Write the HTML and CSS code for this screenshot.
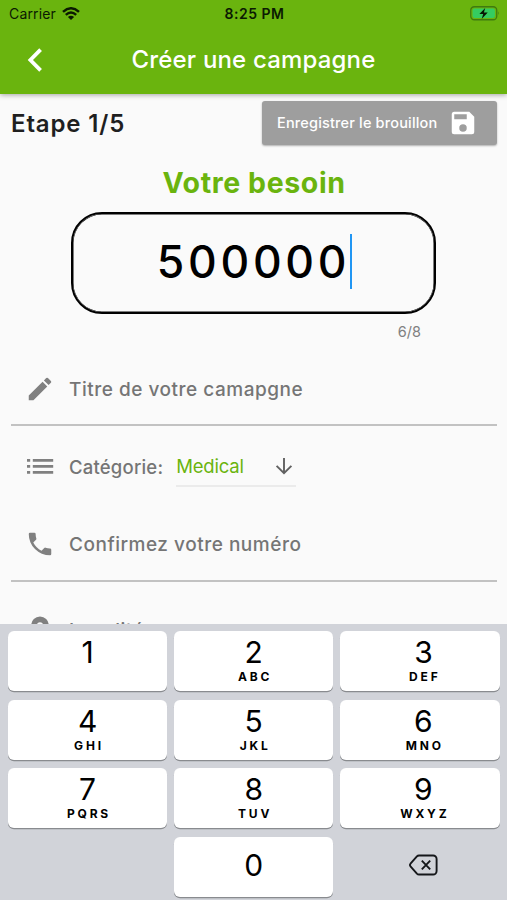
FILE: index.html
```html
<!DOCTYPE html>
<html lang="fr">
<head>
    <meta charset="UTF-8">
    <meta name="viewport" content="width=device-width, initial-scale=1.0">
    <title>Créer une campagne</title>
    <link rel="stylesheet" href="styles.css">
</head>
<body>
    <div class="screen">
        <header class="header">
            <div class="status-bar">
                <div class="carrier">
                    <span class="carrier-name">Carrier</span>
                    <svg class="wifi" viewBox="0 0 18 13">
                        <path d="M1 4.9Q9-2.3 17 4.9" fill="none" stroke="#0b1a02" stroke-width="2.5"/>
                        <path d="M3.8 7.8Q9 3.1 14.2 7.8" fill="none" stroke="#0b1a02" stroke-width="2.4"/>
                        <path d="M9 13L5.9 9.9Q9 7.4 12.1 9.9z" fill="#0b1a02"/>
                    </svg>
                </div>
                <div class="time">8:25 PM</div>
                <svg class="battery" viewBox="0 0 30 15">
                    <rect x="0.75" y="0.75" width="26" height="13" rx="3.5" fill="none" stroke="#3f7a10" stroke-width="1.3"/>
                    <rect x="2.6" y="2.6" width="22.3" height="9.3" rx="1.8" fill="#35cc60"/>
                    <path d="M28 5.2q1.5 2 0 4z" fill="#3f7a10"/>
                    <path d="M15.2 2L9.4 8h3.8l-1.5 5 6-6.4h-3.8z" fill="#071503"/>
                </svg>
            </div>
            <div class="app-bar">
                <svg class="back" viewBox="0 0 16 24">
                    <path d="M13.6 1.7L3.4 12l10.2 10.3" fill="none" stroke="#fff" stroke-width="3.8"/>
                </svg>
                <h1 class="title">Créer une campagne</h1>
            </div>
        </header>

        <main class="content">
            <div class="step-row">
                <div class="step">Etape 1/5</div>
                <button class="draft-btn">
                    <span class="draft-text">Enregistrer le brouillon</span>
                    <svg class="icon" viewBox="0 0 24 24">
                        <path d="M17 3H5a2 2 0 0 0-2 2v14a2 2 0 0 0 2 2h14a2 2 0 0 0 2-2V7l-4-4zm-5 16a3 3 0 1 1 0-6 3 3 0 0 1 0 6zm3-10H5V5h10v4z"/>
                    </svg>
                </button>
            </div>

            <h2 class="need">Votre besoin</h2>
            <div class="amount">
                <span class="amount-value">500000</span>
                <span class="caret"></span>
            </div>
            <div class="counter">6/8</div>

            <div class="field field-title">
                <svg class="icon" viewBox="0 0 24 24">
                    <path d="M3 17.25V21h3.75L17.81 9.94l-3.75-3.75L3 17.25zM20.71 7.04a1 1 0 0 0 0-1.41l-2.34-2.34a1 1 0 0 0-1.41 0l-1.83 1.83 3.75 3.75 1.83-1.83z"/>
                </svg>
                <span class="label">Titre de votre camapgne</span>
            </div>

            <div class="field field-category">
                <svg class="icon" viewBox="0 0 30 30">
                    <path d="M2 7h3.2v2.8H2zM7.8 7h20.4v2.8H7.8zM2 13h3.2v2.8H2zM7.8 13h20.4v2.8H7.8zM2 19h3.2v2.8H2zM7.8 19h20.4v2.8H7.8z"/>
                </svg>
                <span class="label label-category">Catégorie:</span>
                <div class="select">
                    <span class="select-value">Medical</span>
                    <svg class="arrow" viewBox="0 0 18 18">
                        <path d="M9 1v15M1.6 8.8L9 16.2l7.4-7.4" fill="none" stroke="#616161" stroke-width="1.9"/>
                    </svg>
                </div>
            </div>

            <div class="field field-phone">
                <svg class="icon" viewBox="0 0 24 24">
                    <path d="M6.62 10.79a15.15 15.15 0 0 0 6.59 6.59l2.2-2.2a1 1 0 0 1 1.02-.24 11.4 11.4 0 0 0 3.57.57 1 1 0 0 1 1 1V20a1 1 0 0 1-1 1A17 17 0 0 1 3 4a1 1 0 0 1 1-1h3.5a1 1 0 0 1 1 1c0 1.25.2 2.45.57 3.57a1 1 0 0 1-.25 1.02l-2.2 2.2z"/>
                </svg>
                <span class="label">Confirmez votre numéro</span>
            </div>

            <div class="field field-place">
                <svg class="icon" viewBox="0 0 24 24">
                    <path d="M12 2a7 7 0 0 0-7 7c0 5.25 7 13 7 13s7-7.75 7-13a7 7 0 0 0-7-7zm0 9.5a2.5 2.5 0 1 1 0-5 2.5 2.5 0 0 1 0 5z"/>
                </svg>
                <span class="label">Localité</span>
            </div>
        </main>

        <div class="keyboard">
            <div class="key"><span class="digit">1</span><span class="letters"></span></div>
            <div class="key"><span class="digit">2</span><span class="letters">ABC</span></div>
            <div class="key key-right"><span class="digit">3</span><span class="letters">DEF</span></div>
            <div class="key"><span class="digit">4</span><span class="letters">GHI</span></div>
            <div class="key"><span class="digit">5</span><span class="letters">JKL</span></div>
            <div class="key key-right"><span class="digit">6</span><span class="letters">MNO</span></div>
            <div class="key"><span class="digit">7</span><span class="letters">PQRS</span></div>
            <div class="key"><span class="digit">8</span><span class="letters">TUV</span></div>
            <div class="key key-right"><span class="digit">9</span><span class="letters">WXYZ</span></div>
            <div class="blank"></div>
            <div class="key key-zero"><span class="digit">0</span></div>
            <div class="blank key-right">
                <svg class="delete" viewBox="0 0 30 22">
                    <path d="M11 1.5h14.1a3.5 3.5 0 0 1 3.5 3.5v12a3.5 3.5 0 0 1-3.5 3.5H11a3 3 0 0 1-2.1-.9L2.5 12.3a1.8 1.8 0 0 1 0-2.6l6.4-7.3a3 3 0 0 1 2.1-.9zM13.8 6.7l8.4 8.6M22.2 6.7l-8.4 8.6" fill="none" stroke="#15171a" stroke-width="1.9"/>
                </svg>
            </div>
        </div>
    </div>
</body>
</html>
```
FILE: styles.css
```css
* {
    margin: 0;
    padding: 0;
    box-sizing: border-box;
}

body {
    font-family: Inter, 'Liberation Sans', sans-serif;
    background: #fafafa;
    overflow: hidden;
}

.screen {
    display: flex;
    flex-direction: column;
    width: 507px;
    height: 900px;
    overflow: hidden;
}

svg {
    display: block;
    flex-shrink: 0;
}

/* Header */
.header {
    height: 94px;
    flex-shrink: 0;
    background: #6ab40e;
    box-shadow: 0 1px 5px rgba(0,0,0,0.35);
}

.status-bar {
    display: grid;
    grid-template-columns: 1fr auto 1fr;
    align-items: center;
    height: 27px;
    padding: 0 7px 0 9px;
    color: #0b1a02;
}

.carrier {
    display: flex;
    align-items: center;
    gap: 6px;
}

.carrier-name {
    font-size: 14px;
    line-height: 20px;
    letter-spacing: 0.15px;
}

.wifi {
    width: 18px;
    height: 13px;
    margin-top: -1px;
}

.time {
    font-size: 14px;
    font-weight: 600;
    letter-spacing: 0.5px;
}

.battery {
    width: 30px;
    height: 15px;
    justify-self: end;
}

.app-bar {
    display: grid;
    grid-template-columns: 43px 1fr 43px;
    align-items: center;
    height: 66px;
}

.back {
    width: 16px;
    height: 24px;
    justify-self: end;
}

.title {
    font-size: 24px;
    font-weight: 500;
    line-height: 30px;
    letter-spacing: 0.17px;
    text-align: center;
    color: #fff;
}

/* Form */
.content {
    flex: 1;
    min-height: 0;
    overflow: hidden;
    padding: 7px 10px 0 11px;
}

.step-row {
    display: flex;
    justify-content: space-between;
    align-items: center;
    height: 44px;
}

.step {
    font-size: 24px;
    font-weight: 600;
    letter-spacing: 0.85px;
    color: #1f1f1f;
}

.draft-btn {
    display: flex;
    align-items: center;
    justify-content: space-between;
    width: 235px;
    height: 44px;
    padding: 0 19px 0 15px;
    border: none;
    border-radius: 3px;
    background: #9e9e9e;
    box-shadow: 0 1px 2px rgba(0,0,0,0.3);
    font-family: inherit;
    color: #fff;
}

.draft-text {
    font-size: 14.5px;
    font-weight: 500;
    letter-spacing: 0.17px;
    line-height: 18px;
    margin-top: -1px;
    white-space: nowrap;
}

.icon {
    width: 30px;
    height: 30px;
    fill: #808080;
}

.draft-btn .icon {
    fill: #fff;
}

.need {
    margin-top: 19px;
    font-size: 28.5px;
    font-weight: 700;
    line-height: 37px;
    letter-spacing: 0.6px;
    text-align: center;
    color: #6ab40e;
}

.amount {
    display: flex;
    align-items: center;
    justify-content: center;
    width: 365px;
    height: 102px;
    margin: 11px 0 0 60px;
    padding-left: 2px;
    border: 2px solid #000;
    border-radius: 31px;
    box-shadow: inset 0 0 0 0.5px #000;
}

.amount-value {
    font-size: 44.5px;
    font-weight: 450;
    line-height: 54px;
    letter-spacing: 3.7px;
    margin-top: -2px;
    color: #000;
}

.caret {
    width: 2px;
    height: 55px;
    margin-top: -3px;
    background: #2196f3;
}

.counter {
    margin: 9px 76px 0 0;
    font-size: 14.5px;
    line-height: 18px;
    text-align: right;
    color: #808080;
}

.field {
    display: flex;
    align-items: center;
    padding-left: 14px;
    font-size: 19px;
    font-weight: 500;
    color: #757575;
}

.field .icon {
    margin-right: 14px;
}

.field-title {
    height: 73px;
    margin-top: 12px;
    border-bottom: 2px solid #c2c2c2;
}

.field-category {
    height: 82px;
}

.field-phone {
    height: 74px;
    border-bottom: 2px solid #c2c2c2;
}

.field-place {
    height: 93px;
}

.field-place .label {
    padding-top: 4px;
}

.label {
    padding-top: 1px;
    line-height: 24px;
    letter-spacing: 0.52px;
    white-space: nowrap;
}

.field-title .label {
    padding-top: 2px;
}

.label-category {
    padding-top: 0;
    font-size: 18.5px;
    letter-spacing: 0.2px;
}

.select {
    display: flex;
    align-items: center;
    justify-content: space-between;
    width: 120px;
    height: 40px;
    margin-left: 13px;
    padding-right: 3px;
    border-bottom: 2px solid #ebebeb;
}

.select-value {
    font-size: 18.5px;
    font-weight: 400;
    letter-spacing: -0.2px;
    color: #6ab40e;
}

.arrow {
    width: 18px;
    height: 18px;
}

/* Numeric keyboard */
.keyboard {
    display: grid;
    grid-template-columns: repeat(3, 1fr);
    grid-template-rows: repeat(4, 60px);
    gap: 8.5px 7px;
    flex-shrink: 0;
    height: 276px;
    padding: 7px 7.5px 0 8px;
    background: #d1d3d9;
}

.key {
    display: flex;
    flex-direction: column;
    align-items: center;
    padding-top: 3px;
    border-radius: 6px;
    background: #fff;
    box-shadow: 0 1.3px 0 #898b8f;
    color: #000;
}

.digit {
    font-size: 30px;
    line-height: 36px;
}

.letters {
    font-size: 12px;
    font-weight: 700;
    line-height: 13px;
    letter-spacing: 2.8px;
    text-indent: 2.8px;
}

.key-right {
    padding-left: 7px;
}

.key-zero {
    justify-content: center;
    padding: 0 0 4px;
}

.blank {
    display: flex;
    align-items: center;
    justify-content: center;
    padding-bottom: 4px;
}

.delete {
    width: 30px;
    height: 22px;
}
```
